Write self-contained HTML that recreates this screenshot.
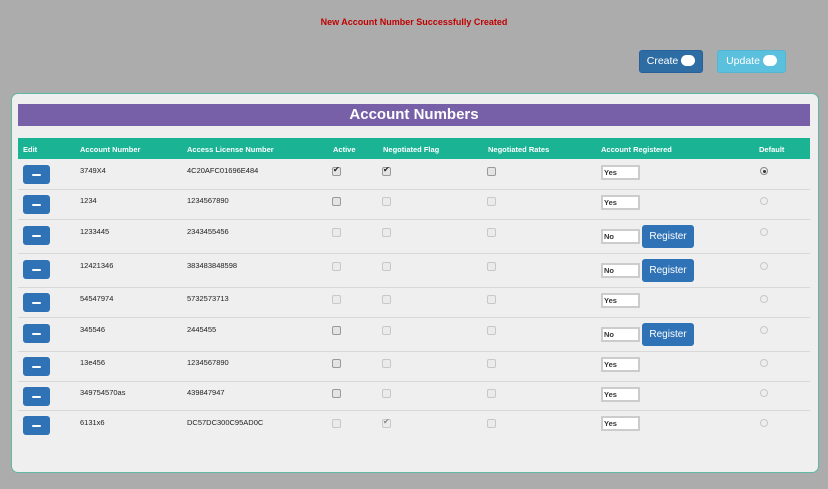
<!DOCTYPE html>
<html><head><meta charset="utf-8"><style>
*{margin:0;padding:0;box-sizing:border-box}
body{width:828px;height:489px;background:#acacac;font-family:"Liberation Sans",Verdana,sans-serif;position:relative;overflow:hidden}
.abs{position:absolute}
.msg{left:0;width:828px;top:17px;text-align:center;color:#c00000;font-size:9px;font-weight:bold}
.btn{border-radius:3px;color:#fff;font-size:10.5px;line-height:21px;text-align:center;white-space:nowrap}
.pill{display:inline-block;width:14px;height:11px;background:#fff;border-radius:6px;vertical-align:-2px;margin-left:3px}
.panel{left:11px;top:93px;width:808px;height:380px;background:#efefef;border:1px solid #5fb9a3;border-radius:7px}
.title{left:18px;top:104px;width:792px;height:22px;background:#7760a8;color:#fff;font-weight:bold;font-size:15px;text-align:center;line-height:21px}
.hdr{left:18px;top:138px;width:792px;height:21px;background:#1ab394}
.h{top:145px;color:#fff;font-size:7.5px;font-weight:bold}
.t{font-size:7.5px;color:#222}
.line{left:18px;width:792px;height:1px;background:#d8d8d8}
.eb{width:27px;height:19px;background:#2f72b5;border-radius:3px}
.eb:after{content:"";position:absolute;left:9px;top:9px;width:9px;height:2px;background:#fff;border-radius:1px}
.cb{width:9px;height:9px;border:1px solid #9a9a9a;border-radius:2px;background:#e4e4e4}
.cb.d{border-color:#c8c8c8;background:#ebebeb}
.cb.c:after{content:"✔";position:absolute;left:0;top:-3px;font-size:8px;color:#222}
.cb.d.c:after{color:#888}
.inp{width:39px;height:15px;border:2px solid #ccc;background:#fff;font-size:7.5px;font-weight:bold;color:#333;padding-left:1px;line-height:11px}
.reg{width:52px;height:23px;background:#2f72b5;border-radius:3px;color:#fff;font-size:10px;text-align:center;line-height:24px}
.rd{width:8px;height:8px;border:1px solid #c8c8c8;border-radius:50%;background:#eee}
.rd.on{border-color:#888}
.rd.on:after{content:"";position:absolute;left:2px;top:2px;width:3px;height:3px;border-radius:50%;background:#333}
</style></head><body>
<div class="abs msg">New Account Number Successfully Created</div>
<div class="abs btn" style="left:639px;top:50px;width:64px;height:23px;background:#2e6da4;border:1px solid #28609a">Create<span class="pill"></span></div>
<div class="abs btn" style="left:717px;top:50px;width:69px;height:23px;background:#5bc0de;border:1px solid #52b5d2">Update<span class="pill"></span></div>
<div class="abs panel"></div>
<div class="abs title">Account Numbers</div>
<div class="abs hdr"></div>
<div class="abs h" style="left:23px">Edit</div>
<div class="abs h" style="left:80px">Account Number</div>
<div class="abs h" style="left:187px">Access License Number</div>
<div class="abs h" style="left:333px">Active</div>
<div class="abs h" style="left:383px">Negotiated Flag</div>
<div class="abs h" style="left:488px">Negotiated Rates</div>
<div class="abs h" style="left:601px">Account Registered</div>
<div class="abs h" style="left:759px">Default</div>

<div class="abs line" style="top:189px"></div>
<div class="abs line" style="top:219px"></div>
<div class="abs line" style="top:253px"></div>
<div class="abs line" style="top:287px"></div>
<div class="abs line" style="top:317px"></div>
<div class="abs line" style="top:351px"></div>
<div class="abs line" style="top:381px"></div>
<div class="abs line" style="top:410px"></div>

<div class="abs eb" style="left:23px;top:165px"></div>
<div class="abs t" style="left:80px;top:166px">3749X4</div>
<div class="abs t" style="left:187px;top:166px">4C20AFC01696E484</div>
<div class="abs cb c" style="left:332px;top:167px"></div>
<div class="abs cb c" style="left:382px;top:167px"></div>
<div class="abs cb" style="left:487px;top:167px"></div>
<div class="abs inp" style="left:601px;top:165px">Yes</div>
<div class="abs rd on" style="left:760px;top:167px"></div>

<div class="abs eb" style="left:23px;top:195px"></div>
<div class="abs t" style="left:80px;top:196px">1234</div>
<div class="abs t" style="left:187px;top:196px">1234567890</div>
<div class="abs cb" style="left:332px;top:197px"></div>
<div class="abs cb d" style="left:382px;top:197px"></div>
<div class="abs cb d" style="left:487px;top:197px"></div>
<div class="abs inp" style="left:601px;top:195px">Yes</div>
<div class="abs rd" style="left:760px;top:197px"></div>

<div class="abs eb" style="left:23px;top:226px"></div>
<div class="abs t" style="left:80px;top:227px">1233445</div>
<div class="abs t" style="left:187px;top:227px">2343455456</div>
<div class="abs cb d" style="left:332px;top:228px"></div>
<div class="abs cb d" style="left:382px;top:228px"></div>
<div class="abs cb d" style="left:487px;top:228px"></div>
<div class="abs inp" style="left:601px;top:229px">No</div>
<div class="abs reg" style="left:642px;top:225px">Register</div>
<div class="abs rd" style="left:760px;top:228px"></div>

<div class="abs eb" style="left:23px;top:260px"></div>
<div class="abs t" style="left:80px;top:261px">12421346</div>
<div class="abs t" style="left:187px;top:261px">383483848598</div>
<div class="abs cb d" style="left:332px;top:262px"></div>
<div class="abs cb d" style="left:382px;top:262px"></div>
<div class="abs cb d" style="left:487px;top:262px"></div>
<div class="abs inp" style="left:601px;top:263px">No</div>
<div class="abs reg" style="left:642px;top:259px">Register</div>
<div class="abs rd" style="left:760px;top:262px"></div>

<div class="abs eb" style="left:23px;top:293px"></div>
<div class="abs t" style="left:80px;top:294px">54547974</div>
<div class="abs t" style="left:187px;top:294px">5732573713</div>
<div class="abs cb d" style="left:332px;top:295px"></div>
<div class="abs cb d" style="left:382px;top:295px"></div>
<div class="abs cb d" style="left:487px;top:295px"></div>
<div class="abs inp" style="left:601px;top:293px">Yes</div>
<div class="abs rd" style="left:760px;top:295px"></div>

<div class="abs eb" style="left:23px;top:324px"></div>
<div class="abs t" style="left:80px;top:325px">345546</div>
<div class="abs t" style="left:187px;top:325px">2445455</div>
<div class="abs cb" style="left:332px;top:326px"></div>
<div class="abs cb d" style="left:382px;top:326px"></div>
<div class="abs cb d" style="left:487px;top:326px"></div>
<div class="abs inp" style="left:601px;top:327px">No</div>
<div class="abs reg" style="left:642px;top:323px">Register</div>
<div class="abs rd" style="left:760px;top:326px"></div>

<div class="abs eb" style="left:23px;top:357px"></div>
<div class="abs t" style="left:80px;top:358px">13e456</div>
<div class="abs t" style="left:187px;top:358px">1234567890</div>
<div class="abs cb" style="left:332px;top:359px"></div>
<div class="abs cb d" style="left:382px;top:359px"></div>
<div class="abs cb d" style="left:487px;top:359px"></div>
<div class="abs inp" style="left:601px;top:357px">Yes</div>
<div class="abs rd" style="left:760px;top:359px"></div>

<div class="abs eb" style="left:23px;top:387px"></div>
<div class="abs t" style="left:80px;top:388px">349754570as</div>
<div class="abs t" style="left:187px;top:388px">439847947</div>
<div class="abs cb" style="left:332px;top:389px"></div>
<div class="abs cb d" style="left:382px;top:389px"></div>
<div class="abs cb d" style="left:487px;top:389px"></div>
<div class="abs inp" style="left:601px;top:387px">Yes</div>
<div class="abs rd" style="left:760px;top:389px"></div>

<div class="abs eb" style="left:23px;top:416px"></div>
<div class="abs t" style="left:80px;top:418px">6131x6</div>
<div class="abs t" style="left:187px;top:418px">DC57DC300C95AD0C</div>
<div class="abs cb d" style="left:332px;top:419px"></div>
<div class="abs cb d c" style="left:382px;top:419px"></div>
<div class="abs cb d" style="left:487px;top:419px"></div>
<div class="abs inp" style="left:601px;top:416px">Yes</div>
<div class="abs rd" style="left:760px;top:419px"></div>
</body></html>
